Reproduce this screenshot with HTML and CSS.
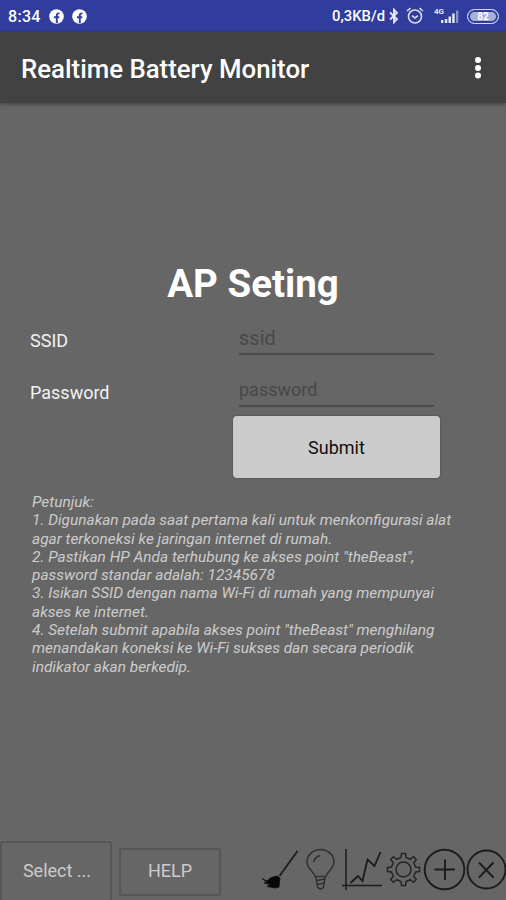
FILE: index.html
```html
<!DOCTYPE html>
<html lang="id">
<head>
  <meta charset="UTF-8">
  <meta name="viewport" content="width=device-width, initial-scale=1.0">
  <title>Realtime Battery Monitor</title>
  <link rel="stylesheet" href="styles.css">
</head>
<body>

<div class="screen">
  <div class="status-bar">
    <span class="clock">8:34</span>
    <svg class="fb" width="15" height="15" viewBox="0 0 15 15"><circle cx="7.5" cy="7.5" r="7.3" fill="#fff"/><path d="M7.8 14V6.2Q7.8 4.2 10.5 4.4M5 8.2H10.3" fill="none" stroke="#303d9c" stroke-width="1.9"/></svg>
    <svg class="fb" width="15" height="15" viewBox="0 0 15 15"><circle cx="7.5" cy="7.5" r="7.3" fill="#fff"/><path d="M7.8 14V6.2Q7.8 4.2 10.5 4.4M5 8.2H10.3" fill="none" stroke="#303d9c" stroke-width="1.9"/></svg>
    <span class="speed">0,3KB/d</span>
    <svg class="bluetooth" width="10" height="16" viewBox="0 0 10 16"><path d="M1 4.5L8 11L5 14.3V1.7L8 5L1 11.5" fill="none" stroke="#e8eaff" stroke-width="1.8"/></svg>
    <svg class="alarm" width="18" height="18" viewBox="0 0 18 18" fill="none" stroke="#d9dcf5" stroke-width="1.6"><circle cx="9" cy="9.5" r="6.5"/><path d="M1 4L4.5 1.2M17 4L13.5 1.2M6 8.7L9 11L12 8.7"/></svg>
    <svg class="signal" width="27" height="18" viewBox="0 0 27 18"><text class="net" x="0" y="7">4G</text><g fill="#e3e5f8"><path d="M7 13h2.300v3H7zM10.800 12h2.500v4h-2.500zM14.500 9.500h2.500V16h-2.500zM18.200 6.500h2.500V16h-2.500z"/><path d="M22 3.500h2.300V16H22z" opacity=".5"/></g></svg>
    <span class="battery">82</span>
  </div>

  <div class="app-bar">
    <h1>Realtime Battery Monitor</h1>
    <svg width="8" height="24" viewBox="0 0 8 24" fill="#fff"><circle cx="4" cy="4" r="3"/><circle cx="4" cy="12" r="3"/><circle cx="4" cy="19.500" r="3"/></svg>
  </div>

  <form class="content">
    <h2>AP Seting</h2>
    <div class="row">
      <label for="ssid">SSID</label>
      <input class="ssid" type="text" id="ssid" placeholder="ssid">
    </div>
    <div class="row">
      <label for="password">Password</label>
      <input type="text" id="password" placeholder="password">
    </div>
    <button class="submit" type="button">Submit</button>
    <p class="help">
      <span>Petunjuk:</span><br>
      <span>1. Digunakan pada saat pertama kali untuk menkonfigurasi alat</span><br>
      <span>agar terkoneksi ke jaringan internet di rumah.</span><br>
      <span>2. Pastikan HP Anda terhubung ke akses point "theBeast",</span><br>
      <span>password standar adalah: 12345678</span><br>
      <span>3. Isikan SSID dengan nama Wi-Fi di rumah yang mempunyai</span><br>
      <span>akses ke internet.</span><br>
      <span>4. Setelah submit apabila akses point "theBeast" menghilang</span><br>
      <span>menandakan koneksi ke Wi-Fi sukses dan secara periodik</span><br>
      <span>indikator akan berkedip.</span>
    </p>
  </form>

  <div class="toolbar">
    <button class="select" type="button">Select ...</button>
    <button class="help-btn" type="button">HELP</button>
    <svg class="tools" width="246" height="60" viewBox="260 840 246 60" fill="none" stroke="#1c1c1c" stroke-width="1.500">
      <!-- brush -->
      <path d="M297.500 851L279.500 876" stroke-width="1.800"/>
      <path d="M262 878.500L267 881L271 877.500L277 876L280 878L279 887L275 888L267 886.500L270 884.500L264 883L267 882.500Z" fill="#080808" stroke="#111" stroke-width=".8"/>
      <!-- bulb -->
      <g stroke="#303030">
        <path d="M316 878C314 871 307 869 307 862A13.500 12.500 0 0 1 334 862C334 869 327 871 325 878L323.500 887Q320.500 891 317.500 887Z"/>
        <path d="M313.500 862Q315 857 320 855.500M316 876.500H325M317 880.500L324.500 879M317.500 884.500L324 883"/>
      </g>
      <!-- chart -->
      <path d="M346 849V890M342 885.500H382"/>
      <path d="M350.500 883L358 876L362.500 881L367.500 859.500L374.500 866L380.500 852" stroke-width="1.800"/>
      <!-- gear -->
      <g stroke="#252525">
        <circle cx="403.500" cy="869.500" r="7.500"/>
        <path d="M401 857.500L401.500 853.500H405.500L406 857.500L410.300 859.300L413.500 856.700L416.300 859.500L413.700 862.700L415.500 867L419.500 867.500V871.500L415.500 872L413.700 876.300L416.300 879.500L413.500 882.300L410.300 879.700L406 881.500L405.500 885.500H401.500L401 881.500L396.700 879.700L393.500 882.300L390.700 879.500L393.300 876.300L391.500 872L387.500 871.500V867.500L391.500 867L393.300 862.700L390.700 859.500L393.500 856.700L396.700 859.300Z"/>
      </g>
      <!-- add / close -->
      <g stroke-width="1.900">
        <circle cx="444.500" cy="869.500" r="19.800"/>
        <path d="M445 859.500V880M434.500 869.500H455"/>
        <circle cx="486.500" cy="869.500" r="19"/>
        <path d="M479 862.500L493.500 877.500M493.500 862.500L479 877.500"/>
      </g>
    </svg>
  </div>
</div>

</body>
</html>
```
FILE: styles.css
```css
* {
  box-sizing: border-box;
}
body {
  margin: 0;
  font-family: Roboto, sans-serif;
  background-color: #666;
}
.screen {
  display: flex;
  flex-direction: column;
  height: 900px;
  overflow: hidden;
}
svg {
  flex: none;
}
.status-bar {
  display: flex;
  align-items: center;
  height: 32px;
  padding: 0 7px 0 8px;
  background-color: #303d9c;
  color: #fff;
  font-weight: 500;
}
.clock {
  width: 41px;
  font-size: 16px;
  letter-spacing: 0.3px;
}
.fb {
  margin-right: 8px;
}
.speed {
  margin-left: auto;
  font-size: 14.8px;
}
.bluetooth {
  margin-left: 4px;
}
.alarm {
  margin-left: 7px;
}
.signal {
  margin-left: 10px;
}
.net {
  font-size: 8px;
  font-weight: 700;
  fill: #e3e5f8;
}
.battery {
  width: 32px;
  height: 15px;
  margin-left: 6px;
  border: 1.5px solid #d5d8f0;
  border-radius: 8px;
  background-color: #aab0dc;
  box-shadow: inset 0 0 0 2px #303d9c;
  font-size: 10px;
  font-weight: 700;
  line-height: 13px;
  text-align: center;
}
.app-bar {
  display: flex;
  align-items: center;
  justify-content: space-between;
  height: 71px;
  padding: 0 24px 0 21px;
  background-color: #424242;
  box-shadow: 0 1px 4px rgba(0, 0, 0, 0.4);
  color: #fff;
}
h1 {
  margin: 0;
  padding-top: 3px;
  font-size: 25.8px;
  font-weight: 500;
}
.content {
  flex: 1;
  padding: 158px 30px 0;
}
h2 {
  margin: 0 0 6px;
  color: #fff;
  font-size: 38.5px;
  line-height: 46px;
  text-align: center;
}
.row {
  display: flex;
  height: 51.5px;
  padding-right: 42px;
  justify-content: space-between;
}
label {
  padding-top: 16px;
  color: #f2f2f2;
  font-size: 18px;
  line-height: 23px;
}
input {
  width: 195px;
  height: 42px;
  padding: 10px 0 0;
  border: none;
  border-bottom: 2px solid #4c4c4c;
  outline: none;
  background: none;
  font-family: inherit;
  font-size: 18px;
}
.ssid {
  padding-top: 9px;
  font-size: 20px;
}
input::placeholder {
  color: #484848;
}
.submit {
  display: block;
  width: 207px;
  height: 62px;
  margin-left: 203px;
  border: none;
  border-radius: 4px;
  background-color: #ccc;
  box-shadow: 0 0 2px rgba(0, 0, 0, 0.4);
  color: #111;
  font-family: inherit;
  font-size: 18px;
}
.help {
  margin: 15px 0 0 2px;
  color: #ccc;
  font-size: 15.43px;
  font-style: italic;
  line-height: 18.3px;
  white-space: nowrap;
}
.toolbar {
  display: flex;
  align-items: flex-start;
  height: 60px;
}
.toolbar button {
  border: 2px solid #565656;
  border-radius: 3px;
  background: none;
  color: #ccc;
  font-family: inherit;
  font-size: 18px;
  padding: 0;
}
.toolbar .select {
  width: 112px;
  height: 62px;
  margin-top: 1px;
  padding: 0 0 4px 2px;
}
.toolbar .help-btn {
  width: 102px;
  height: 48px;
  margin: 8px 0 0 7px;
  padding-bottom: 3px;
}
.tools {
  margin-left: auto;
}
```
